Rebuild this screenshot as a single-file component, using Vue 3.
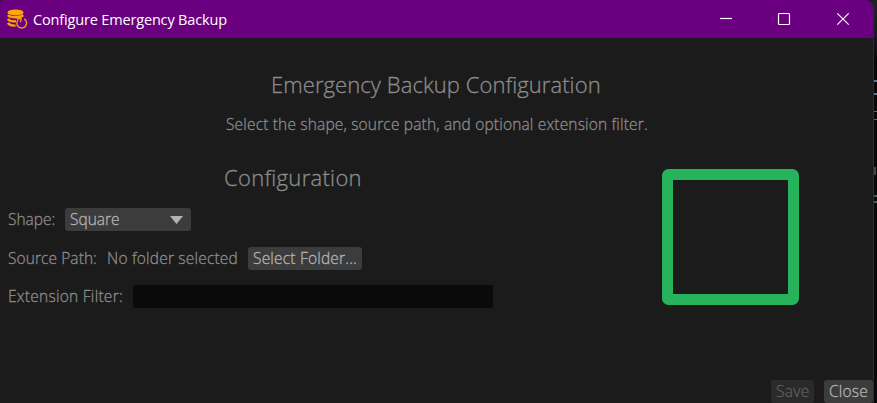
<script setup>
import { ref } from 'vue'

const shape = ref('Square')
const extension = ref('')
</script>

<template>
  <div class="desktop">
    <div class="window">
      <header class="titlebar">
        <svg class="app-icon" viewBox="0 0 21 21">
          <ellipse cx="8.5" cy="3.4" rx="8" ry="3" fill="#ffa50a" />
          <path d="M.9 6C3 9 13 9 16.2 6M.9 10C2.4 12.2 6 12.6 9 12.2M.9 14C2.4 16.2 5.5 16.8 8.5 16.5" fill="none" stroke="#f9a00d" stroke-width="2.4" />
          <path d="M17.2 9.9a4.9 4.9 0 1 1-5.8.6M9.8 9.6l4.3-.1-.6 3.6" fill="none" stroke="#f0991a" stroke-width="1.4" />
        </svg>
        <span class="title">Configure Emergency Backup</span>
        <div class="controls">
          <svg viewBox="0 0 14 14"><path d="M1 6.5h12" /></svg>
          <svg viewBox="0 0 14 14"><rect x="1.5" y="1.5" width="11" height="11" rx="1" /></svg>
          <svg viewBox="0 0 14 14"><path d="M1.3 1.3l11.4 11.4M12.7 1.3L1.3 12.7" /></svg>
        </div>
      </header>
      <main class="content">
        <h1 class="heading">Emergency Backup Configuration</h1>
        <p class="subtitle">Select the shape, source path, and optional extension filter.</p>
        <div class="columns">
          <section class="form">
            <h2 class="section-heading">Configuration</h2>
            <div class="row">
              <span class="l-shape">Shape:</span>
              <button class="combo"><span>{{ shape }}</span>
                <svg viewBox="0 0 13 8"><path d="M0 0h13L6.5 8z" fill="#b4b4b4" /></svg>
              </button>
            </div>
            <div class="row">
              <span class="l-source">Source Path:</span>
              <span class="l-none">No folder selected</span>
              <button class="folder"><span>Select Folder...</span></button>
            </div>
            <div class="row">
              <span class="l-ext">Extension Filter:</span>
              <input v-model="extension" class="field" />
            </div>
          </section>
          <div class="preview"><svg viewBox="0 0 137 136"><rect x="5.5" y="5.5" width="126" height="125" rx="1" fill="none" stroke="#27b35c" stroke-width="11" stroke-linejoin="round" /></svg></div>
        </div>
      </main>
      <footer class="actions">
        <button class="save" disabled><span>Save</span></button>
        <button class="close"><span>Close</span></button>
      </footer>
    </div>
    <aside class="behind">
      <i class="m1"></i><i class="m2"></i><i class="m3"></i><i class="m4"></i><i class="m5"></i><i class="m6"></i><i class="m7"></i>
    </aside>
  </div>
</template>

<style>
body { overflow: hidden; background: #050507; }
</style>

<style scoped>
* { box-sizing: border-box; }
.desktop { display: flex; width: 877px; height: 403px; overflow: hidden; background: linear-gradient(#20202b 0, #1a1c25 30px, #08080b 60px); font-family: "Open Sans", "Noto Sans", sans-serif; font-weight: 300; font-size: 15.5px; color: #8c8c8c; }
.window { width: 874px; height: 403px; flex: none; display: flex; flex-direction: column; background: #1b1b1b; border-right: 1px solid #6a0080; border-radius: 3px 9px 0 0; overflow: hidden; }
.titlebar { height: 38px; flex: none; display: flex; align-items: center; background: #6a0080; margin-right: -1px; padding-left: 7px; color: #fff; }
.app-icon { width: 21px; height: 21px; flex: none; margin-right: 5px; }
.title { font-size: 14.5px; font-weight: 400; white-space: nowrap; letter-spacing: -.16px; }
.controls { margin-left: auto; display: flex; gap: 44.5px; padding-right: 24.5px; }
.controls svg { width: 14px; height: 14px; fill: none; stroke: #fff; stroke-width: 1.2; }
.content { flex: 1; display: flex; flex-direction: column; }
.content, .actions { -webkit-text-stroke: .3px currentColor; }
.heading, .section-heading { margin: 0; font-size: 22px; line-height: 30px; font-weight: 300; white-space: nowrap; }
.heading { width: 331px; margin: 31px 0 0 271px; letter-spacing: .08px; }
.subtitle { margin: 13px 0 0 226px; line-height: 24px; white-space: nowrap; letter-spacing: .17px; }
.columns { display: flex; margin-top: 26px; }
.form { width: 662px; padding-left: 8px; }
.section-heading { margin-left: 216px; margin-bottom: 16px; letter-spacing: .3px; }
.row { display: flex; align-items: center; height: 23px; gap: 10px; margin-bottom: 16px; }
.row + .row { margin-top: -.5px; }
.row > span { flex: none; }
span { white-space: nowrap; display: block; line-height: 23px; }
.l-shape { width: 47px; } .l-source { width: 89px; letter-spacing: .08px; } .l-none { width: 131px; letter-spacing: .2px; } .l-ext { width: 115px; letter-spacing: .27px; }
button { font: inherit; color: #b4b4b4; background: #3c3c3c; border: 0; border-radius: 3px; height: 23px; padding: 0 5px; text-align: left; }
.combo { width: 126px; display: flex; align-items: center; justify-content: space-between; padding-right: 8px; }
.combo svg { width: 13px; height: 8px; }
.folder { width: 114px; letter-spacing: .2px; }
.field { width: 360px; height: 23px; border: 0; border-radius: 3px; background: #0a0a0a; color: #b4b4b4; outline: 0; padding: 0 5px; font: inherit; }
.preview { padding-top: 7px; }
.preview svg { display: block; width: 137px; height: 136px; }
.actions { display: flex; justify-content: flex-end; gap: 10px; height: 23px; }
.save { width: 43px; background: #2a2a2a; color: #5e5e5e; letter-spacing: .3px; }
.close { width: 49px; letter-spacing: .2px; }
.behind { width: 3px; position: relative; }
.behind i { position: absolute; left: 0; width: 3px; height: 2px; background: #5f7890; }
.m1 { top: 80px; } .m2 { top: 93px; }
.behind .m3 { top: 111px; height: 1px; background: #666; } .behind .m4 { top: 119px; height: 1px; background: #666; }
.behind .m5 { top: 167px; height: 8px; width: 2px; background: #444; }
.behind .m6 { top: 195px; background: #48634a; } .behind .m7 { top: 201px; background: #48634a; }
</style>
